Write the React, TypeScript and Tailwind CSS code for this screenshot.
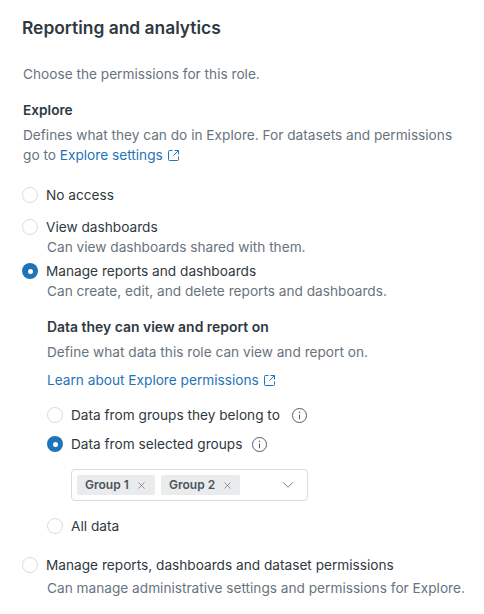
import { ChevronDown, X } from "lucide-react";

const ExternalIcon = () => (
  <svg width="11" height="11" viewBox="0 0 11 11" fill="none" stroke="#1f73b7" strokeWidth="1" className="ml-[5px] inline-block align-[-1px]">
    <path d="M4.5.5h-3a1 1 0 0 0-1 1v8a1 1 0 0 0 1 1h8a1 1 0 0 0 1-1v-3" />
    <path d="M6.5.5h4v4M10.5.5l-5 5" />
  </svg>
);

const InfoIcon = () => (
  <svg width="15" height="15" viewBox="0 0 16 16" fill="none" stroke="#49545c" strokeWidth="1">
    <circle cx="8" cy="8" r="7.5" />
    <path d="M8 7v5" />
    <circle cx="8" cy="4.5" r=".8" fill="#49545c" stroke="none" />
  </svg>
);

const Radio = ({ checked = false }: { checked?: boolean }) =>
  checked ? (
    <span className="flex h-4 w-4 shrink-0 items-center justify-center rounded-full bg-[#1f73b7]">
      <span className="h-[5px] w-[5px] rounded-full bg-white" />
    </span>
  ) : (
    <span className="h-4 w-4 shrink-0 rounded-full border border-[#d8dcde] bg-white" />
  );

const Option = ({ label, checked, infoGap }: { label: string; checked?: boolean; infoGap?: string }) => (
  <div className="flex h-5 items-center text-[#2f3941]">
    <Radio checked={checked} />
    <span className="ml-2">{label}</span>
    {infoGap && (
      <span className={infoGap}>
        <InfoIcon />
      </span>
    )}
  </div>
);

const Tag = ({ label, width }: { label: string; width: string }) => (
  <span className={`flex h-5 items-center rounded-[2px] bg-[#e9ebed] pl-[8px] text-[12px] font-semibold text-[#49545c] ${width}`}>
    {label}
    <X size={11} strokeWidth={1.25} className="ml-[7px]" />
  </span>
);

export default function App() {
  return (
    <div className="min-h-[614px] w-[484px] overflow-hidden bg-white pl-[23px] pt-[16px] text-[13.66px] leading-5 text-[#68737d] [font-family:Inter,sans-serif]">
      <h1 className="-ml-px text-[17.4px] leading-6 font-semibold text-[#2f3941]">Reporting and analytics</h1>
      <p className="mt-[24px]">Choose the permissions for this role.</p>
      <h2 className="mt-4 font-semibold text-[#2f3941]">Explore</h2>
      <p className="mt-[5px] w-[440px]">
        Defines what they can do in Explore. For datasets and permissions go to{" "}
        <a className="text-[#1f73b7]">
          Explore settings
          <ExternalIcon />
        </a>
      </p>

      <div className="mt-[20px] -ml-px">
        <Option label="No access" />
      </div>
      <div className="mt-3">
        <div className="-ml-px">
          <Option label="View dashboards" />
        </div>
        <p className="pl-6">Can view dashboards shared with them.</p>
      </div>
      <div className="mt-1">
        <div className="-ml-px">
          <Option label="Manage reports and dashboards" checked />
        </div>
        <p className="pl-6">Can create, edit, and delete reports and dashboards.</p>
      </div>

      <div className="pl-6">
        <h3 className="mt-[16px] text-[13.95px] font-semibold text-[#2f3941]">Data they can view and report on</h3>
        <p className="mt-[5px]">Define what data this role can view and report on.</p>
        <a className="mt-2 block text-[#1f73b7]">
          Learn about Explore permissions
          <ExternalIcon />
        </a>
        <div className="mt-[15px]">
          <Option label="Data from groups they belong to" infoGap="ml-3" />
        </div>
        <div className="mt-[9px]">
          <Option label="Data from selected groups" checked infoGap="ml-[10px]" />
        </div>
        <div className="mt-[15px] ml-6 flex h-8 w-[237px] items-center gap-[6px] rounded-[4px] border border-[#d8dcde] pl-[5px]">
          <Tag label="Group 1" width="w-[78px]" />
          <Tag label="Group 2" width="w-[79px]" />
          <ChevronDown size={18} strokeWidth={1} className="ml-auto mr-[10px] text-[#49545c]" />
        </div>
        <div className="mt-[15px]">
          <Option label="All data" />
        </div>
      </div>

      <div className="mt-[19px] -ml-px">
        <Option label="Manage reports, dashboards and dataset permissions" />
      </div>
      <p className="mt-[3px] pl-6">Can manage administrative settings and permissions for Explore.</p>
    </div>
  );
}
